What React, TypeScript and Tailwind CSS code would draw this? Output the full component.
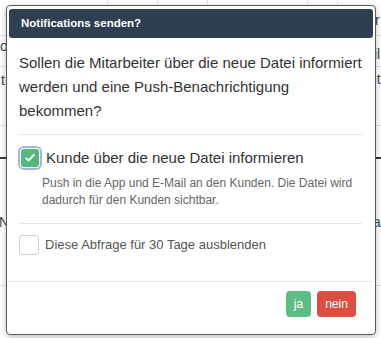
import React from "react";

// Background table rows peeking out from behind the modal
const bgLines = [
  { top: 35, dark: false },
  { top: 66, dark: false },
  { top: 125, dark: false },
  { top: 157, dark: true },
  { top: 285, dark: false },
];

const bgFragments = [
  { text: "o", top: 36, x: 0 },
  { text: "t", top: 70, x: 1 },
  { text: "N", top: 212, x: -1 },
  { text: "r", top: 10, x: 375 },
  { text: "il", top: 44, x: 374 },
  { text: "nt", top: 69, x: 369 },
  { text: "a", top: 212, x: 373 },
];

const CheckIcon = () => (
  <svg viewBox="0 0 16 16" className="w-[12px] h-[12px]" fill="none">
    <path d="M3 8.5l3 3 7-7.5" stroke="#fff" strokeWidth="2.6" strokeLinecap="round" strokeLinejoin="round" />
  </svg>
);

export default function App() {
  return (
    <div
      className="relative w-[381px] h-[338px] overflow-hidden bg-white text-[#333]"
      style={{ fontFamily: '"Liberation Sans", Arial, sans-serif' }}
    >
      {/* backdrop table */}
      <div className="absolute inset-0">
        {bgLines.map((l, i) => (
          <div
            key={i}
            className={l.dark ? "absolute left-0 right-0 h-[2px] bg-[#3a3a3a]" : "absolute left-0 right-0 h-px bg-[#e3e3e3]"}
            style={{ top: l.top }}
          />
        ))}
        {[107, 157, 207, 307, 337].map((x) => (
          <div key={x} className="absolute top-0 h-[5px] w-px bg-[#e6e6e6]" style={{ left: x }} />
        ))}
        {bgFragments.map((f, i) => (
          <span
            key={i}
            className="absolute text-[14px] leading-[20px] text-[#444]"
            style={{ top: f.top, left: f.x }}
          >
            {f.text}
          </span>
        ))}
      </div>

      {/* modal */}
      <div className="absolute left-[6px] top-[5px] w-[370px] h-[330px] flex flex-col bg-white border border-[#5a5a5a] rounded-[4px] shadow-[0_2px_6px_rgba(0,0,0,0.25)] pt-[3px] px-[2px]">
        <div className="h-[29px] flex items-center pl-[12px] bg-[#2d3f50] rounded-[3px] text-white text-[11.5px] font-bold">
          Notifications senden?
        </div>

        <div className="flex flex-col pl-[10px] pr-[8px]">
          <p className="mt-[13px] text-[15px] leading-[24px] text-[#333]">
            Sollen die Mitarbeiter über die neue Datei informiert werden und eine Push-Benachrichtigung bekommen?
          </p>
          <div className="mt-[11px] mr-[3px] h-px bg-[#e6e6e6]" />

          <div className="mt-[11px] h-[24px] flex items-center">
            <span className="ml-[2px] w-[18px] h-[18px] flex items-center justify-center rounded-[3px] bg-[#54b87b] ring-2 ring-[#a3b4df] ring-offset-1">
              <CheckIcon />
            </span>
            <span className="ml-[7px] text-[15px] text-[#333]">Kunde über die neue Datei informieren</span>
          </div>
          <p className="mt-[5px] ml-[23px] text-[12px] leading-[17px] text-[#666]">
            Push in die App und E-Mail an den Kunden. Die Datei wird dadurch für den Kunden sichtbar.
          </p>
          <div className="mt-[14px] mr-[3px] h-px bg-[#e6e6e6]" />

          <div className="mt-[11px] h-[20px] flex items-center">
            <span className="w-[20px] h-[20px] rounded-[3px] border border-[#cfcfcf] bg-white" />
            <span className="ml-[6px] text-[13px] text-[#555]">Diese Abfrage für 30 Tage ausblenden</span>
          </div>
        </div>

        <div className="mt-[26px] h-px bg-[#e6e6e6]" />

        <div className="mt-[9px] flex justify-end gap-[6px] pr-[17px]">
          <button className="w-[25px] h-[26px] rounded-[4px] bg-[#5cbd86] text-white text-[12px]">ja</button>
          <button className="w-[39px] h-[26px] rounded-[4px] bg-[#da4f41] text-white text-[12px]">nein</button>
        </div>
      </div>
    </div>
  );
}
